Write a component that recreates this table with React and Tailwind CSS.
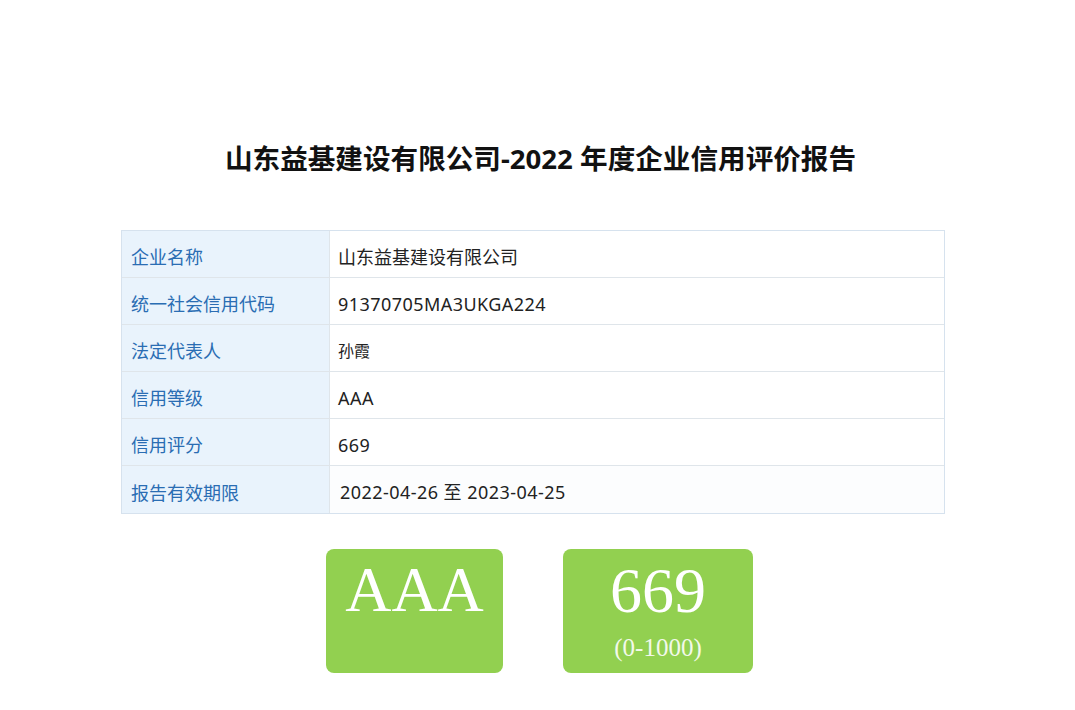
import React from 'react';

const rows = [
  { label: '企业名称', value: '山东益基建设有限公司' },
  { label: '统一社会信用代码', value: '91370705MA3UKGA224', latin: true },
  { label: '法定代表人', value: '孙霞', small: true },
  { label: '信用等级', value: 'AAA', latin: true },
  { label: '信用评分', value: '669', latin: true },
  { label: '报告有效期限', value: '2022-04-26 至 2023-04-25', latin: true, last: true },
];

const cjk = { fontFamily: '"Noto Sans", "Noto Sans CJK SC", sans-serif' };
const serif = { fontFamily: '"Liberation Serif", "DejaVu Serif", serif' };

export default function App() {
  return (
    <div className="w-[1075px] h-[710px] bg-white flex flex-col" style={cjk}>
      <h1 className="mt-[139px] pl-[6px] text-center text-[27.6px] font-bold text-[#111] leading-[38px]">
        山东益基建设有限公司-2022 年度企业信用评价报告
      </h1>

      <div className="mt-[53px] ml-[121px] w-[824px] border border-[#d6e2ee]">
        {rows.map((r, i) => (
          <div
            key={r.label}
            className={`flex h-[47px] ${i < rows.length - 1 ? 'border-b border-[#dfe5ea]' : ''}`}
          >
            <div className="w-[208px] shrink-0 bg-[#e9f3fc] flex items-center pl-[9px] pt-[7px] text-[18px] text-[#2a6db3] border-r border-[#dfe5ea]">
              {r.label}
            </div>
            <div
              className={`flex-1 flex items-center pt-[6px] text-[#222] ${r.last ? 'pl-[10px] bg-[#fcfdfe]' : 'pl-[8px]'} ${r.small ? 'text-[16px]' : 'text-[18px]'} ${r.latin ? 'tracking-[0.45px]' : ''}`}
            >
              {r.value}
            </div>
          </div>
        ))}
      </div>

      <div className="mt-[35px] ml-[326px] flex gap-[60px]">
        <div className="w-[177px] h-[124px] rounded-[8px] bg-[#92d050] flex flex-col items-center text-white" style={serif}>
          <div className="mt-[6px] text-[64px] leading-[70px]">AAA</div>
        </div>
        <div className="w-[190px] h-[124px] rounded-[8px] bg-[#92d050] flex flex-col items-center text-white" style={serif}>
          <div className="mt-[7px] text-[64px] leading-[70px]">669</div>
          <div className="mt-[7px] text-[25px] leading-[30px] text-[#f2f9ea]">(0-1000)</div>
        </div>
      </div>
    </div>
  );
}
